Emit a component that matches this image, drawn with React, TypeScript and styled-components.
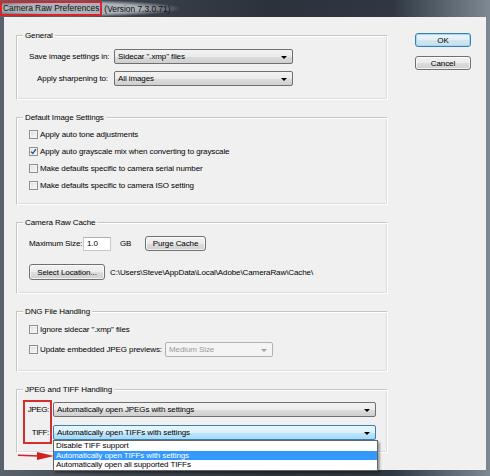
import React from 'react'
import styled, { createGlobalStyle, css } from 'styled-components'

const GlobalStyle = createGlobalStyle`
  html, body {
    margin: 0;
    padding: 0;
    width: 490px;
    height: 476px;
    overflow: hidden;
    background: #2b333d;
  }
  body {
    font-family: "Liberation Sans", Arial, sans-serif;
    font-size: 8px;
    letter-spacing: -0.1px;
    color: #000;
  }
`

const Window = styled.div`
  width: 490px;
  height: 476px;
  display: flex;
  flex-direction: column;
  background: linear-gradient(90deg, #5a626b 0%, #3a424c 25%, #2a323c 55%, #2f3842 80%, #7f8993 100%);
`

const TitleBar = styled.div`
  height: 17px;
  display: flex;
  align-items: center;
  flex-shrink: 0;
`

const TitleGlow = styled.div`
  display: flex;
  align-items: center;
  height: 17px;
  padding-right: 10px;
  background: radial-gradient(ellipse at 40% 50%, rgba(178, 184, 190, 0.95) 45%, rgba(178, 184, 190, 0) 72%);
  font-size: 8.4px;
  letter-spacing: 0;
`

const TitleBox = styled.span`
  height: 15px;
  box-sizing: border-box;
  border: 2px solid #d6262b;
  padding: 0 1px;
  line-height: 11px;
  color: #111;
`

const Version = styled.span`
  margin-left: 2px;
  color: #111;
`

const Client = styled.div`
  flex: 1;
  margin: 0 4px 6px 4px;
  background: #f0f0f0;
  display: flex;
  padding: 16px 0 0 12px;
  box-sizing: border-box;
`

const GroupsColumn = styled.div`
  width: 372px;
  margin-top: 2px;
  display: flex;
  flex-direction: column;
  gap: 17px;
`

const ButtonColumn = styled.div`
  width: 56px;
  margin-left: 27px;
  display: flex;
  flex-direction: column;
  gap: 9px;
`

const Group = styled.div<{ $h: number }>`
  position: relative;
  box-sizing: border-box;
  height: ${p => p.$h}px;
  border: 1px solid #c6c6c6;
  border-right-color: #fff;
  border-bottom-color: #fff;
  box-shadow: inset 1px 1px 0 #fff, inset -1px -1px 0 #dcdcdc;
  padding: 0 0 0 12px;
`

const Caption = styled.span`
  display: block;
  width: fit-content;
  margin: -6px 0 0 -6px;
  padding: 0 2px;
  line-height: 11px;
  background: #f0f0f0;
`

const Rows = styled.div<{ $pt: number; $gap: number }>`
  display: flex;
  flex-direction: column;
  padding-top: ${p => p.$pt}px;
  gap: ${p => p.$gap}px;
`

const SettingRow = styled.div`
  display: grid;
  grid-template-columns: 79px 179px;
  column-gap: 6px;
  align-items: center;
`

const RightLabel = styled.span<{ $tight?: boolean }>`
  text-align: right;
  white-space: nowrap;
  ${p => p.$tight && 'letter-spacing: -0.35px;'}
`

type SelectVariant = 'normal' | 'focus' | 'disabled'

const SelectBox = styled.div<{ $w?: number; $variant?: SelectVariant }>`
  position: relative;
  box-sizing: border-box;
  width: ${p => (p.$w ? `${p.$w}px` : '100%')};
  height: 15px;
  border: 1px solid #707070;
  border-radius: 2px;
  padding: 0 12px 0 3px;
  display: flex;
  align-items: center;
  white-space: nowrap;
  background: linear-gradient(#f2f2f2 0%, #ebebeb 50%, #dddddd 51%, #cfcfcf 100%);
  ${p =>
    p.$variant === 'focus' &&
    css`
      border-color: #3c7fb1;
      background: linear-gradient(#eaf6fd 0%, #d9f0fc 50%, #bee6fd 51%, #a7d9f5 100%);
    `}
  ${p =>
    p.$variant === 'disabled' &&
    css`
      border-color: #adb2b5;
      background: #f4f4f4;
      color: #9a9a9a;
    `}
`

const Arrow = styled.span<{ $disabled?: boolean }>`
  position: absolute;
  right: 5px;
  top: 6px;
  width: 0;
  height: 0;
  border-left: 3px solid transparent;
  border-right: 3px solid transparent;
  border-top: 3px solid ${p => (p.$disabled ? '#a0a0a0' : '#000')};
`

const Select = ({ value, w, variant }: { value: string; w?: number; variant?: SelectVariant }) => (
  <SelectBox $w={w} $variant={variant}>
    {value}
    <Arrow $disabled={variant === 'disabled'} />
  </SelectBox>
)

const CheckRow = styled.div`
  display: flex;
  align-items: center;
  height: 13px;
  gap: 2px;
  white-space: nowrap;
`

const Box = styled.span`
  box-sizing: border-box;
  width: 9px;
  height: 9px;
  border: 1px solid #8e8f8f;
  background: linear-gradient(135deg, #dcdcdc, #fbfbfb);
  box-shadow: inset 0 0 0 1px #f4f4f4;
  display: flex;
  align-items: center;
  justify-content: center;
  flex-shrink: 0;
`

const Check = ({ checked, label }: { checked?: boolean; label: string }) => (
  <CheckRow>
    <Box>
      {checked && (
        <svg width="7" height="7" viewBox="0 0 7 7">
          <path d="M1 3.6 L2.8 5.4 L6 1.2" fill="none" stroke="#2a4a8c" strokeWidth="1.3" />
        </svg>
      )}
    </Box>
    {label}
  </CheckRow>
)

const FlexRow = styled.div`
  display: flex;
  align-items: center;
  white-space: nowrap;
`

const Fixed = styled.span<{ $w: number }>`
  width: ${p => p.$w}px;
  flex-shrink: 0;
`

const Input = styled.span`
  box-sizing: border-box;
  width: 28px;
  height: 14px;
  border: 1px solid #c5c9cc;
  border-top-color: #abadb3;
  background: #fff;
  padding: 0 3px;
  display: flex;
  align-items: center;
  margin-right: 9px;
`

const Button = styled.div<{ $w?: number; $h?: number; $default?: boolean }>`
  box-sizing: border-box;
  width: ${p => (p.$w ? `${p.$w}px` : '100%')};
  height: ${p => p.$h ?? 15}px;
  border: 1px solid #707070;
  border-radius: 3px;
  display: flex;
  align-items: center;
  justify-content: center;
  white-space: nowrap;
  background: linear-gradient(#f2f2f2 0%, #ebebeb 50%, #dddddd 51%, #cfcfcf 100%);
  box-shadow: inset 0 0 0 1px rgba(255, 255, 255, 0.7);
  ${p =>
    p.$default &&
    css`
      border-color: #3c7fb1;
      background: linear-gradient(#eef6fa 0%, #e2eef5 50%, #d3e6f0 51%, #c7dfec 100%);
      box-shadow: inset 0 0 0 1px #9fd9f5;
    `}
`

const PathText = styled.span`
  margin-left: 5px;
`

const JpegGrid = styled.div`
  display: grid;
  grid-template-columns: 22px 323px;
  column-gap: 4px;
  row-gap: 8px;
  align-items: center;
  padding-top: 7px;
  margin-left: -2px;
`

const DropWrap = styled.div`
  position: relative;
`

const DropList = styled.div`
  position: absolute;
  top: 100%;
  left: 0;
  width: 325px;
  box-sizing: border-box;
  background: #fff;
  border: 1px solid #646464;
  box-shadow: 2px 2px 2px rgba(0, 0, 0, 0.35);
  z-index: 2;
`

const DropItem = styled.div<{ $active?: boolean }>`
  height: 9.5px;
  line-height: 9.5px;
  padding-left: 2px;
  white-space: nowrap;
  ${p =>
    p.$active &&
    css`
      background: #3399ff;
      color: #fff;
    `}
`

const Highlight = styled.div`
  position: absolute;
  left: 6px;
  top: 10px;
  width: 29px;
  height: 44px;
  box-sizing: border-box;
  border: 2px solid #d42e2e;
  pointer-events: none;
`

const Pointer = styled.svg`
  position: absolute;
  left: 0;
  top: 61px;
`

export default function App() {
  return (
    <>
      <GlobalStyle />
      <Window>
        <TitleBar>
          <TitleGlow>
            <TitleBox>Camera Raw Preferences</TitleBox>
            <Version>(Version 7.3.0.71)</Version>
          </TitleGlow>
        </TitleBar>
        <Client>
          <GroupsColumn>
            <Group $h={65}>
              <Caption>General</Caption>
              <Rows $pt={8} $gap={7}>
                <SettingRow>
                  <RightLabel>Save image settings in:</RightLabel>
                  <Select value={'Sidecar ".xmp" files'} />
                </SettingRow>
                <SettingRow>
                  <RightLabel>Apply sharpening to:</RightLabel>
                  <Select value="All images" />
                </SettingRow>
              </Rows>
            </Group>

            <Group $h={88}>
              <Caption>Default Image Settings</Caption>
              <Rows $pt={5} $gap={4}>
                <Check label="Apply auto tone adjustments" />
                <Check checked label="Apply auto grayscale mix when converting to grayscale" />
                <Check label="Make defaults specific to camera serial number" />
                <Check label="Make defaults specific to camera ISO setting" />
              </Rows>
            </Group>

            <Group $h={72}>
              <Caption>Camera Raw Cache</Caption>
              <Rows $pt={8} $gap={13}>
                <FlexRow>
                  <Fixed $w={54}>Maximum Size:</Fixed>
                  <Input>1.0</Input>
                  <Fixed $w={25}>GB</Fixed>
                  <Button $w={61}>Purge Cache</Button>
                </FlexRow>
                <FlexRow>
                  <Button $w={76} $h={16}>Select Location...</Button>
                  <PathText>{'C:\\Users\\Steve\\AppData\\Local\\Adobe\\CameraRaw\\Cache\\'}</PathText>
                </FlexRow>
              </Rows>
            </Group>

            <Group $h={61}>
              <Caption>DNG File Handling</Caption>
              <Rows $pt={6} $gap={6}>
                <Check label={'Ignore sidecar ".xmp" files'} />
                <FlexRow>
                  <Fixed $w={136}>
                    <Check label="Update embedded JPEG previews:" />
                  </Fixed>
                  <Select value="Medium Size" w={108} variant="disabled" />
                </FlexRow>
              </Rows>
            </Group>

            <Group $h={64}>
              <Caption>JPEG and TIFF Handling</Caption>
              <JpegGrid>
                <RightLabel $tight>JPEG:</RightLabel>
                <Select value="Automatically open JPEGs with settings" />
                <RightLabel $tight>TIFF:</RightLabel>
                <DropWrap>
                  <Select value="Automatically open TIFFs with settings" variant="focus" />
                  <DropList>
                    <DropItem>Disable TIFF support</DropItem>
                    <DropItem $active>Automatically open TIFFs with settings</DropItem>
                    <DropItem>Automatically open all supported TIFFs</DropItem>
                  </DropList>
                </DropWrap>
              </JpegGrid>
              <Highlight />
              <Pointer width="38" height="10" viewBox="0 0 38 10">
                <path d="M1 4.2 L22 5" stroke="#d42020" strokeWidth="1.4" fill="none" />
                <polygon points="20,1 37,5 20,9" fill="#d42020" />
              </Pointer>
            </Group>
          </GroupsColumn>

          <ButtonColumn>
            <Button $default $h={14}>OK</Button>
            <Button $h={14}>Cancel</Button>
          </ButtonColumn>
        </Client>
      </Window>
    </>
  )
}
